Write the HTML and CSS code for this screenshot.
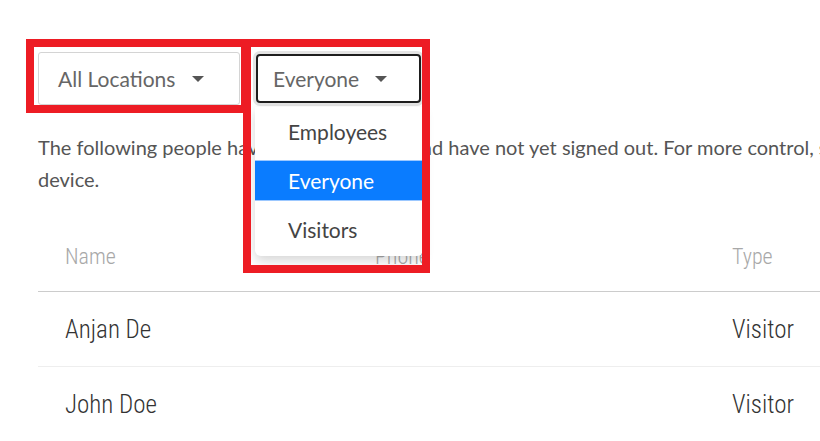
FILE: index.html
```html
<!DOCTYPE html>
<html>
<head>
    <title>Signed In</title>
    <link rel="stylesheet" href="styles.css">
</head>
<body>
    <div class="page">
        <div class="filters">
            <div class="select">
                <span>All Locations</span>
                <span class="caret"></span>
            </div>
            <div class="select-wrap">
                <div class="select active">
                    <span>Everyone</span>
                    <span class="caret"></span>
                </div>
                <ul class="menu">
                    <li>Employees</li>
                    <li class="selected">Everyone</li>
                    <li>Visitors</li>
                </ul>
            </div>
        </div>

        <p class="intro">The following people have signed in today and have not yet signed out. For more control, sign them out from your<br>device.</p>

        <div class="table">
            <div class="row head">
                <div>Name</div>
                <div>Phone</div>
                <div>Type</div>
            </div>
            <div class="row">
                <div>Anjan De</div>
                <div></div>
                <div>Visitor</div>
            </div>
            <div class="row">
                <div>John Doe</div>
                <div></div>
                <div>Visitor</div>
            </div>
        </div>
    </div>

    <!-- highlight boxes drawn over the screenshot -->
    <div class="mark mark-locations"></div>
    <div class="mark mark-type"></div>
</body>
</html>
```

FILE: styles.css
```css
body {
    margin: 0;
    padding: 0;
    background: #ffffff;
    font-family: Lato, "Open Sans", sans-serif;
    overflow: hidden;
}
.page {
    width: 1140px;
    padding: 52px 0 0 38px;
}
.filters {
    display: flex;
    align-items: flex-start;
    gap: 16px;
}
.select {
    box-sizing: border-box;
    width: 202px;
    height: 53px;
    padding: 0 35px 0 19px;
    border: 1px solid #d4d4d4;
    border-radius: 3px;
    display: flex;
    align-items: center;
    justify-content: space-between;
    font-size: 21px;
    color: #666666;
}
.caret {
    width: 0;
    height: 0;
    border-left: 6px solid transparent;
    border-right: 6px solid transparent;
    border-top: 6px solid #555555;
}
.select-wrap {
    position: relative;
    margin-top: 2px;
}
.select.active {
    width: 165px;
    height: 49px;
    padding: 0 32px 0 15px;
    border: 2px solid #1e1e1e;
    border-radius: 4px;
    box-shadow: 0 0 0 3px #e4e4e4;
}
.menu {
    position: absolute;
    top: 53px;
    left: -1px;
    width: 168px;
    margin: 0;
    padding: 4px 0 6px;
    list-style: none;
    background: #ffffff;
    border-radius: 0 0 6px 6px;
    box-shadow: 0 5px 12px rgba(0, 0, 0, 0.16);
    display: flex;
    flex-direction: column;
    gap: 8px;
}
.menu li {
    height: 41px;
    line-height: 41px;
    padding-left: 33px;
    font-size: 21px;
    color: #444444;
}
.menu li.selected {
    background: #0a7cff;
    color: #ffffff;
    border-top: 1px solid #9cc8ff;
    border-bottom: 1px solid #9cc8ff;
    height: 39px;
    line-height: 39px;
}
.intro {
    margin: 26px 0 27px;
    width: 1400px;
    font-size: 20px;
    line-height: 32px;
    color: #555555;
}
.row {
    display: grid;
    grid-template-columns: 310px 357px 1fr;
    height: 74px;
    align-items: center;
    border-bottom: 1px solid #eeeeee;
    font-family: "Liberation Sans Narrow", "Roboto Condensed", "DejaVu Sans Condensed", sans-serif;
    font-weight: 300;
    font-size: 25px;
    color: #333333;
}
.row div {
    padding-left: 27px;
}
.row.head {
    height: 69px;
    border-bottom-color: #cccccc;
    font-size: 22px;
    color: #a8a8a8;
}
.mark {
    position: absolute;
    box-sizing: border-box;
    border: 8px solid #ed1c24;
}
.mark-locations {
    left: 26px;
    top: 39px;
    width: 223px;
    height: 74px;
}
.mark-type {
    left: 243px;
    top: 39px;
    width: 187px;
    height: 234px;
}
```
